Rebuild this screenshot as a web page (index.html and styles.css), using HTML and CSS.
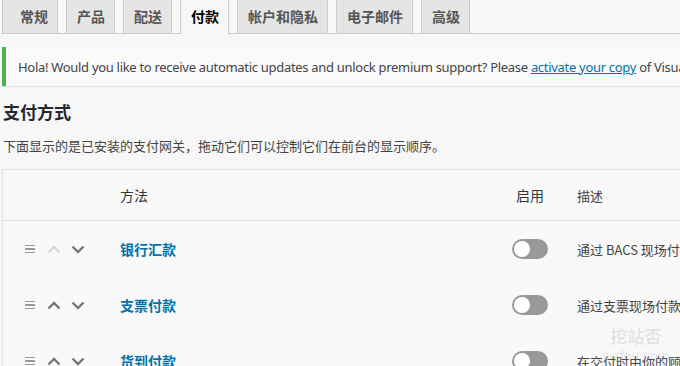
FILE: index.html
```html
<!DOCTYPE html>
<html lang="zh-CN">
<head>
<meta charset="utf-8">
<title>付款设置</title>
<link rel="stylesheet" href="styles.css">
</head>
<body>
<div class="wrap">
  <nav class="tabs">
    <a class="tab first">常规</a>
    <a class="tab">产品</a>
    <a class="tab">配送</a>
    <a class="tab active">付款</a>
    <a class="tab">帐户和隐私</a>
    <a class="tab">电子邮件</a>
    <a class="tab">高级</a>
  </nav>

  <div class="notice">
    <p>Hola! Would you like to receive automatic updates and unlock premium support? Please <a class="link" href="#">activate your copy</a> of Visual Composer.</p>
  </div>

  <h2 class="title">支付方式</h2>
  <p class="desc">下面显示的是已安装的支付网关，拖动它们可以控制它们在前台的显示顺序。</p>

  <div class="table">
    <div class="row head">
      <div class="cell sort"></div>
      <div class="cell name">方法</div>
      <div class="cell enabled">启用</div>
      <div class="cell text">描述</div>
    </div>
    <div class="row">
      <div class="cell sort">
        <span class="handle"><i></i><i></i><i></i></span>
        <svg class="chev off" viewBox="0 0 14 9" width="14" height="9"><path d="M1.5 7.5 L7 2 L12.5 7.5"/></svg>
        <svg class="chev" viewBox="0 0 14 9" width="14" height="9"><path d="M1.5 1.5 L7 7 L12.5 1.5"/></svg>
      </div>
      <div class="cell name"><a class="method" href="#">银行汇款</a></div>
      <div class="cell enabled"><span class="toggle"></span></div>
      <div class="cell text">通过 BACS 现场付款，更多被称为直接银行/电汇转账。</div>
    </div>
    <div class="row">
      <div class="cell sort">
        <span class="handle"><i></i><i></i><i></i></span>
        <svg class="chev" viewBox="0 0 14 9" width="14" height="9"><path d="M1.5 7.5 L7 2 L12.5 7.5"/></svg>
        <svg class="chev" viewBox="0 0 14 9" width="14" height="9"><path d="M1.5 1.5 L7 7 L12.5 1.5"/></svg>
      </div>
      <div class="cell name"><a class="method" href="#">支票付款</a></div>
      <div class="cell enabled"><span class="toggle"></span></div>
      <div class="cell text">通过支票现场付款。这个离线网关也可以用于测试购买。</div>
    </div>
    <div class="row">
      <div class="cell sort">
        <span class="handle"><i></i><i></i><i></i></span>
        <svg class="chev" viewBox="0 0 14 9" width="14" height="9"><path d="M1.5 7.5 L7 2 L12.5 7.5"/></svg>
        <svg class="chev" viewBox="0 0 14 9" width="14" height="9"><path d="M1.5 1.5 L7 7 L12.5 1.5"/></svg>
      </div>
      <div class="cell name"><a class="method" href="#">货到付款</a></div>
      <div class="cell enabled"><span class="toggle"></span></div>
      <div class="cell text">在交付时由你的顾客现金付款。</div>
    </div>
  </div>
</div>
<div class="watermark">
  <span class="wm-cn">挖站否</span>
  <span class="wm-en">wzfou.com</span>
</div>
</body>
</html>
```

FILE: styles.css
```css
html, body {
  margin: 0;
  padding: 0;
  background: #f7f7f7;
  overflow: hidden;
  width: 680px;
  height: 366px;
}
body {
  font-family: "Noto Sans", "Noto Sans CJK SC", sans-serif;
  font-size: 13px;
  color: #444;
  position: relative;
}
.wrap {
  padding-left: 2px;
  width: 1000px;
}
.tabs {
  display: flex;
  margin-top: -1px;
  border-bottom: 1px solid #ccc;
  font-family: "Noto Sans CJK SC", sans-serif;
}
.tab {
  display: block;
  padding: 5px 9px 5px 10px;
  margin-left: 8px;
  font-size: 14px;
  line-height: 23px;
  font-weight: 600;
  color: #555;
  background: #e5e5e5;
  border: 1px solid #ccc;
  border-bottom: none;
}
.tab.first {
  margin-left: 0;
  padding-left: 17px;
}
.tab.active {
  background: #f7f7f7;
  color: #000;
  font-weight: 700;
  margin-bottom: -1px;
  padding-bottom: 6px;
}
.notice {
  margin-top: 13px;
  background: #fafafa;
  border-left: 4px solid #46b450;
  box-shadow: 0 1px 1px rgba(0, 0, 0, 0.08);
  padding: 1px 12px;
  white-space: nowrap;
}
.notice p {
  margin: 9px 0 8px;
  line-height: 20px;
  font-size: 13px;
  letter-spacing: -0.3px;
  color: #444;
}
.link {
  color: #0073aa;
  text-decoration: underline;
}
.title {
  font-family: "Noto Sans CJK SC", sans-serif;
  font-size: 17px;
  font-weight: 700;
  color: #23282d;
  margin: 13px 0 0 1px;
  line-height: 26px;
}
.desc {
  font-family: "Noto Sans CJK SC", sans-serif;
  font-size: 13px;
  color: #444;
  margin: 11px 0 0 1px;
  line-height: 20px;
}
.table {
  margin-top: 13px;
  border: 1px solid #e3e3e3;
  background: #f9f9f9;
  box-shadow: 0 1px 1px rgba(0, 0, 0, 0.04);
  font-family: "Noto Sans CJK SC", sans-serif;
}
.row {
  display: grid;
  grid-template-columns: 102px 396px 61px 1fr;
  height: 56px;
  align-items: center;
}
.row.head {
  height: 50px;
  border-bottom: 1px solid #e3e3e3;
  color: #32373c;
  font-size: 14px;
}
.cell {
  padding-left: 15px;
  white-space: nowrap;
}
.cell.sort {
  padding-left: 22px;
  display: flex;
  align-items: center;
}
.cell.enabled {
  padding-left: 11px;
}
.row.head .cell.enabled {
  padding-left: 15px;
}
.handle {
  display: flex;
  flex-direction: column;
  gap: 2px;
  width: 10px;
  margin-right: 12px;
}
.handle i {
  display: block;
  height: 1.5px;
  background: #999;
}
.chev {
  margin-right: 10px;
  fill: none;
  stroke: #72777c;
  stroke-width: 2.4;
}
.chev.off {
  stroke: #d6d6d6;
}
.method {
  color: #0073aa;
  font-weight: 700;
  font-size: 14px;
  text-decoration: none;
}
.toggle {
  display: block;
  position: relative;
  width: 36px;
  height: 20px;
  border-radius: 10px;
  background: #999;
}
.toggle::after {
  content: "";
  position: absolute;
  left: 2px;
  top: 2px;
  width: 16px;
  height: 16px;
  border-radius: 50%;
  background: #fff;
}
.cell.text {
  font-size: 13px;
  color: #444;
}
.watermark {
  position: absolute;
  left: 606px;
  top: 326px;
  width: 60px;
  display: flex;
  flex-direction: column;
  align-items: center;
  pointer-events: none;
}
.wm-cn {
  font-family: "Noto Sans CJK SC", sans-serif;
  font-weight: 700;
  font-size: 17px;
  line-height: 20px;
  color: rgba(150, 150, 150, 0.22);
}
.wm-en {
  font-family: "Liberation Sans", sans-serif;
  font-size: 14px;
  line-height: 14px;
  color: rgba(150, 150, 150, 0.22);
  margin-top: 3px;
}
```
